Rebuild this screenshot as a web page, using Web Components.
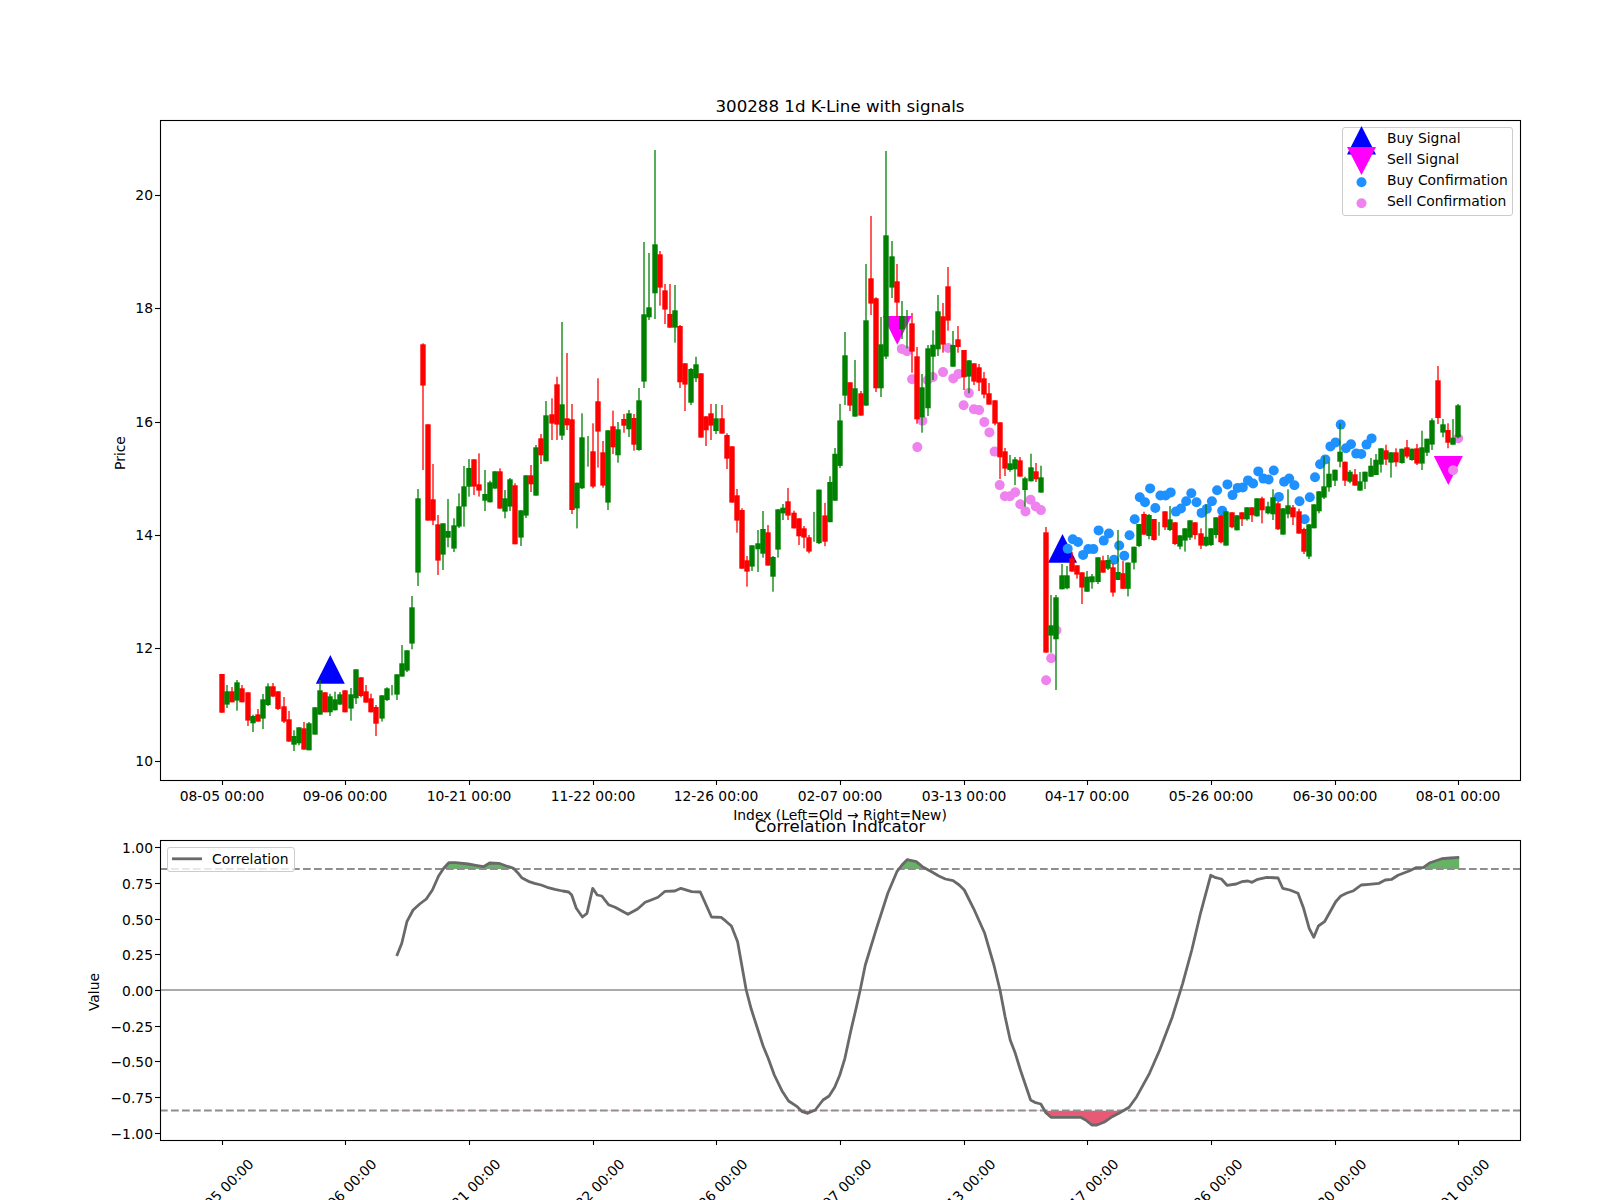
<!DOCTYPE html>
<html>
<head>
<meta charset="utf-8">
<title>300288 1d K-Line with signals</title>
<style>
  html, body { margin: 0; padding: 0; background: #fff; }
</style>
</head>
<body>
<mpl-figure>
  <kline-panel heading="300288 1d K-Line with signals" xlabel="Index (Left=Old → Right=New)">
    <chart-legend style="left:1342px;top:127px;width:171px;height:89px;">
      <legend-row marker="buy">Buy Signal</legend-row>
      <legend-row marker="sell">Sell Signal</legend-row>
      <legend-row marker="buy-dot">Buy Confirmation</legend-row>
      <legend-row marker="sell-dot">Sell Confirmation</legend-row>
    </chart-legend>
  </kline-panel>
  <corr-panel heading="Correlation Indicator">
    <chart-legend style="left:167px;top:23px;width:128px;height:25px;">
      <legend-row marker="line">Correlation</legend-row>
    </chart-legend>
  </corr-panel>
</mpl-figure>

<script>
const SVG_FONT = '"DejaVu Sans", "Liberation Sans", sans-serif';
const TICK_DATES = ['08-05', '09-06', '10-21', '11-22', '12-26', '02-07', '03-13', '04-17', '05-26', '06-30', '08-01'];
const TICK_X = [222.5, 345.5, 469.5, 593.5, 716.5, 840.5, 964.5, 1087.5, 1211.5, 1335.5, 1458.5];

// x position of bar i (241 bars, matplotlib 5% margins)
const barX = i => 221.8 + 5.1517 * i;

// candles: colour, body top, body bottom, wick top, wick bottom, read off crops of the chart
// each block has the crop's top edge and y scale
const CANDLE_BLOCKS = [
  [590, 3, `r252,368,252,368 g304,344,285,354 r304,337,291,337 g277,332,270,362 r295,337,285,337
    r307,392,307,408 g378,400,374,426 r373,395,357,395 g328,386,312,417 g289,345,280,348
    r289,320,279,320 r304,357,304,360 r349,395,321,399 r388,455,363,455 g438,464,421,483
    g412,460,412,466 r415,479,396,479 g400,481,396,481 g352,434,352,434 g301,374,270,374
    r307,367,307,367 g319,367,311,378 g328,361,305,361 g313,344,306,344 r301,367,301,367
    g313,356,294,392 g238,325,238,342 r262,318,262,322 r304,338,285,338 r325,367,311,367
    r351,401,345,438 g316,386,316,395 g295,330,292,333 g300,300,285,316 g253,314,253,330
    g220,260,165,260 g181,242,181,246 g52,161,18,178`],
  [330, 3, `g505,728,477,768 r43,167,40,420 r283,572,283,572 r508,572,402,585 r583,692,555,735
    g580,674,580,720 g603,623,507,652 g586,656,565,666 g529,590,490,594 g469,530,408,590
    g414,470,387,500 r388,470,388,495 r463,482,370,500 g492,512,420,543 g457,517,452,517
    g424,476,424,476 r424,536,415,536 g505,545,480,565 g448,530,444,543 r466,643,460,643
    g541,623,541,648 g436,557,436,564 r436,463,405,486 g352,497,345,497 r325,376,312,402
    g256,394,213,394 r253,281,205,330 r163,284,140,330 g223,317,-24,330 r265,286,69,300
    r268,540,222,552 g458,535,458,595 g322,475,250,477 g360,360,318,410 r364,470,280,475
    r214,305,145,413 r367,467,333,473 g301,518,301,540 r289,352,242,372 g298,376,276,398`],
  [140, 3, `r837,857,822,878 g820,868,810,891 r834,914,822,932 g781,930,744,932 g523,725,306,744
    g502,532,339,540 g313,460,30,537 r343,443,333,497 r451,509,432,552 r522,563,432,563
    g511,563,435,608 r558,727,555,744 r670,734,670,813 g687,788,684,795 g673,715,650,726
    r700,893,700,893 r829,871,829,918 r820,857,792,900 g835,873,792,882 r835,881,795,881
    r885,956,880,987 r919,1088,919,1088 r1066,1142,1047,1178 r1110,1286,1105,1286 r1261,1295,1248,1340
    g1216,1280,1216,1293 g1210,1228,1170,1296 g1167,1241,1113,1253 r1177,1277,1155,1277 g1251,1310,1248,1355
    g1108,1229,1108,1253 g1103,1120,1092,1140 r1084,1127,1044,1140 r1118,1165,1112,1165 r1135,1189,1135,1215
    r1165,1193,1158,1225 r1192,1235,1185,1240`],
  [90, 2.24, `g975,975,945,1012 g895,1015,895,1017 r953,1012,925,1022 g878,968,865,968 g815,920,802,920
    g740,842,703,847`],
  [140, 3, `g646,767,576,795 r727,797,727,813 g745,830,660,830 r760,827,753,827 g541,797,372,797
    r415,491,228,525 r475,745,472,756 g613,745,531,771 g286,650,33,657 g349,443,303,474
    r424,488,372,530 g528,567,483,597 g570,570,510,625 r550,635,519,698 r649,838,621,851
    g742,832,702,878 g625,805,615,828 g614,650,571,720 g514,628,465,648 r529,614,489,638
    r439,542,381,572`],
  [270, 3, `g225,290,183,290 r208,231,168,248 r240,322,240,360 g271,320,271,370 r280,335,280,345
    r292,338,282,363 r325,374,306,385 r370,404,339,404 r391,461,391,466 r457,562,457,627
    r544,596,534,618 g580,600,555,605 g568,598,561,645 r571,620,561,620 g625,660,620,710
    g592,634,551,634 r604,628,579,636 g622,668,587,668 r787,1148,771,1148 g1066,1097,975,1148
    g982,1108,975,1260 g916,958,882,958 g916,955,888,958 r865,905,845,905 r886,914,886,926
    r907,953,907,1002 g920,965,903,965 g919,937,912,956 g862,936,862,942 r871,908,857,908
    g870,896,855,900 r892,968,880,980 g906,930,780,930`],
  [100, 2.24, `r1060,1095,1032,1095 g1036,1095,1036,1112`],
  [450, 3, `g290,338,290,358 g222,288,222,291 r192,254,185,254 g195,258,192,268 r207,270,207,272
    g230,230,216,257 r184,232,184,240 g208,240,168,243 r217,282,217,285 g256,290,256,298
    g235,272,235,305 g211,263,211,270 r217,255,217,268 r250,287,235,297 g260,287,163,290
    g235,285,235,288 g202,255,202,265 r196,277,196,280 g184,287,184,287 r187,232,187,235
    g196,241,196,241 r187,208,187,228 g172,208,172,212 r172,196,172,216 g145,199,145,200
    r145,181,140,220 g169,190,155,193 g142,193,118,210 r160,238,155,240 g175,254,175,254
    g166,193,118,205`],
  [350, 3, `r472,502,465,525 r484,551,476,551 r537,605,533,612 g523,620,523,627 g463,535,463,535
    g424,484,424,490 g409,443,318,447 g371,412,335,425 g359,392,359,408 g305,335,220,352
    r335,392,335,408 g365,395,360,400 r373,407,357,407 g394,422,366,422 g365,395,365,417
    g347,380,324,380 g329,375,312,375 g295,344,295,368 r301,329,284,345 g307,338,307,383
    r307,337,295,350 g296,339,296,341 r292,320,270,325 g296,330,296,332 r295,341,282,345
    g292,341,242,360 g266,308,266,318 g211,284,205,300 r91,204,48,222 g223,248,207,262
    r240,278,220,295 g263,284,207,284 g166,262,162,265`],
];

function readCandles() {
  const out = [];
  CANDLE_BLOCKS.forEach(([y0, k, text]) => {
    text.trim().split(/\s+/).forEach(tok => {
      const [a, b, c, d] = tok.slice(1).split(',').map(v => y0 + Number(v) / k);
      out.push({ color: tok[0] === 'r' ? '#ff0000' : '#008000', top: a, bot: b, wickTop: c, wickBot: d });
    });
  });
  return out;
}

// sell confirmations [bar, y]
const SELL_DOTS = [[132,348.9],[133,351.2],[134,379.3],[135,447.1],[136,420.8],[137,380.2],[138,377.1],[140,372.1],
  [141,348],[142,378.4],[143,373.9],[144,405.2],[145,393.1],[146,409.2],[147,410.1],[148,422.1],[149,432.4],[150,451.6],
  [151,485.1],[152,496.3],[153,496.3],[154,492.2],[155,504.3],[156,511.4],[157,499.8],[158,506.5],[159,510.1],
  [160,680.2],[161,658.3],[162,630.2],[239,470.3],[240,438.3]];

// buy confirmations from bar 164 on, y read at scale 2.24 below y=100
const BUY_DOTS = [1005,984,990,1019,1006,1006,964,987,971,1030,998,1021,975,939,890,901,870,914,886,886,879,922,915,899,881,
  901,925,916,899,874,920,861,885,869,868,852,859,832,848,850,830,889,855,848,863,899,939,890,845,816,805,776,767,727,780,771,
  792,793,772,758].map((z, n) => [164 + n, 100 + z / 2.24]);

const tri = (cx, top, bot, hw, up) => up
  ? `${cx},${top} ${cx - hw},${bot} ${cx + hw},${bot}`
  : `${cx - hw},${top} ${cx + hw},${top} ${cx},${bot}`;

class MplFigure extends HTMLElement {
  constructor() {
    super();
    this.attachShadow({ mode: 'open' });
    this.shadowRoot.innerHTML = `
      <style>
        :host { display: flex; flex-direction: column; width: 1600px; height: 1200px; overflow: hidden; background: #fff; }
      </style>
      <slot></slot>`;
  }
}

class KlinePanel extends HTMLElement {
  constructor() {
    super();
    this.attachShadow({ mode: 'open' });
  }

  connectedCallback() {
    const priceY = p => 761.2 - 56.6 * (p - 10);
    const candles = readCandles();

    const wicksAndBodies = candles.map((c, i) => {
      const x = Math.round(barX(i));
      const body = c.bot > c.top
        ? `<rect x="${x - 2.7}" y="${c.top.toFixed(1)}" width="5.4" height="${(c.bot - c.top).toFixed(1)}" fill="${c.color}"/>`
        : '';
      return `<rect x="${x - 0.65}" y="${c.wickTop.toFixed(1)}" width="1.3" height="${(c.wickBot - c.wickTop).toFixed(1)}" fill="${c.color}"/>${body}`;
    }).join('');

    const dots = (list, fill, dx) => list.map(([i, y]) =>
      `<circle cx="${(barX(i) + dx).toFixed(1)}" cy="${y.toFixed(1)}" r="5" fill="${fill}"/>`).join('');

    const yTicks = [10, 12, 14, 16, 18, 20].map(p => {
      const y = Math.round(priceY(p));
      return `<line x1="155" x2="160" y1="${y + 0.5}" y2="${y + 0.5}" stroke="#000" stroke-width="1.1"/>
        <text x="153" y="${y + 5}" text-anchor="end">${p}</text>`;
    }).join('');

    const xTicks = TICK_X.map((x, n) => `<line x1="${x}" x2="${x}" y1="780" y2="785" stroke="#000" stroke-width="1.1"/>
      <text x="${x - 0.5}" y="801" text-anchor="middle">${TICK_DATES[n]} 00:00</text>`).join('');

    this.shadowRoot.innerHTML = `
      <style>
        :host { display: block; position: relative; flex: 0 0 824px; height: 824px; }
        svg { display: block; overflow: visible; font-family: ${SVG_FONT}; font-size: 13.89px; fill: #000; }
        .title { font-size: 16.67px; }
      </style>
      <svg width="1600" height="824" viewBox="0 0 1600 824">
        <text class="title" x="840" y="111.7" text-anchor="middle">${this.getAttribute('heading')}</text>
        <polygon points="${tri(330.3, 655, 683.7, 14.5, true)}" fill="#0000ff"/>
        <polygon points="${tri(1062.5, 534, 562.7, 14.5, true)}" fill="#0000ff"/>
        <polygon points="${tri(897.3, 316, 344.7, 14.5, false)}" fill="#ff00ff"/>
        <polygon points="${tri(1448.3, 456, 485, 14.5, false)}" fill="#ff00ff"/>
        ${dots(SELL_DOTS, '#ee82ee', 0)}
        ${dots(BUY_DOTS, '#1e90ff', 1)}
        ${wicksAndBodies}
        <rect x="160.5" y="120.5" width="1360" height="660" fill="none" stroke="#000" stroke-width="1.1"/>
        ${yTicks}
        ${xTicks}
        <text x="125" y="453" text-anchor="middle" transform="rotate(-90 125 453)">Price</text>
        <text x="840" y="820" text-anchor="middle">${this.getAttribute('xlabel')}</text>
      </svg>
      <slot></slot>`;
  }
}

// correlation line as read from two crops: x = left + zx / 1.96, y = 800 + zy / 3
const CORR_LEFT = [[660,468],[670,430],[680,365],[692,330],[705,312],[718,297],[730,270],[742,228],[752,205],[762,188],[775,188],
  [800,192],[815,196],[830,200],[842,189],[860,190],[875,198],[888,204],[897,218],[905,233],[918,244],[930,250],[943,255],[955,262],
  [970,268],[985,273],[997,276],[1003,285],[1012,325],[1024,351],[1033,340],[1044,265],[1053,285],[1062,288],[1075,314],[1088,322],
  [1113,343],[1132,327],[1147,307],[1160,299],[1172,292],[1186,274],[1205,273],[1217,265],[1238,275],[1255,276],[1277,351],[1296,352],
  [1304,362],[1316,378],[1328,425],[1345,570],[1355,628],[1378,738],[1388,775],[1400,825],[1415,872],[1428,903],[1445,920],[1455,935]];
const CORR_RIGHT = [[15,940],[30,930],[45,900],[57,888],[68,862],[78,825],[88,775],[100,690],[110,625],[118,570],[128,495],[150,385],
  [172,280],[190,215],[200,195],[210,179],[228,185],[240,200],[258,215],[272,228],[285,237],[300,242],[312,255],[322,270],[340,325],
  [362,400],[380,495],[392,570],[402,650],[412,720],[422,760],[432,810],[452,900],[460,907],[472,912],[482,938],[492,952],[520,952],
  [550,952],[560,960],[572,975],[582,975],[598,965],[612,950],[625,940],[645,922],[660,890],[685,820],[705,750],[730,650],[750,550],
  [768,450],[785,340],[805,226],[815,233],[826,237],[837,256],[855,252],[866,245],[878,243],[886,247],[897,238],[915,232],[937,234],
  [946,265],[960,270],[976,280],[987,325],[998,385],[1007,412],[1016,378],[1028,365],[1050,305],[1060,288],[1072,279],[1085,272],
  [1100,255],[1115,253],[1135,250],[1147,240],[1160,238],[1172,226],[1195,212],[1207,203],[1222,202],[1235,188],[1258,176],[1275,174],[1292,172]];

class CorrPanel extends HTMLElement {
  constructor() {
    super();
    this.attachShadow({ mode: 'open' });
  }

  connectedCallback() {
    const valueY = v => 990 - 142.8 * v;
    const pts = [
      ...CORR_LEFT.map(([a, b]) => [60 + a / 1.96, 800 + b / 3]),
      ...CORR_RIGHT.map(([a, b]) => [800 + a / 1.96, 800 + b / 3]),
    ].map(([x, y]) => `${x.toFixed(1)},${y.toFixed(1)}`);
    const line = pts.join(' ');
    const hi = 869, lo = 1110.5;
    const first = pts[0].split(',')[0], last = pts[pts.length - 1].split(',')[0];

    const labels = [1, 0.75, 0.5, 0.25, 0, -0.25, -0.5, -0.75, -1].map(v => {
      const y = Math.round(valueY(v));
      const text = (v < 0 ? '\u2212' : '') + Math.abs(v).toFixed(2);
      return `<line x1="155" x2="160" y1="${y + 0.5}" y2="${y + 0.5}" stroke="#000" stroke-width="1.1"/>
        <text x="153" y="${y + 5.5}" text-anchor="end">${text}</text>`;
    }).join('');

    // labels run past the bottom of the figure, as in the reference
    const xTicks = TICK_X.map((x, n) => `<line x1="${x}" x2="${x}" y1="1140" y2="1145" stroke="#000" stroke-width="1.1"/>
      <text x="${x - 1.5}" y="1196.5" text-anchor="middle" transform="rotate(-45 ${x - 1.5} 1191.5)">${TICK_DATES[n]} 00:00</text>`).join('');

    this.shadowRoot.innerHTML = `
      <style>
        :host { display: block; position: relative; flex: 0 0 376px; height: 376px; }
        svg { display: block; overflow: visible; font-family: ${SVG_FONT}; font-size: 13.89px; fill: #000; }
        .title { font-size: 16.67px; }
      </style>
      <svg width="1600" height="376" viewBox="0 824 1600 376">
        <defs>
          <clipPath id="above"><rect x="160" y="840" width="1360" height="${hi - 840}"/></clipPath>
          <clipPath id="below"><rect x="160" y="${lo}" width="1360" height="${1140 - lo}"/></clipPath>
        </defs>
        <text class="title" x="840" y="831.7" text-anchor="middle">${this.getAttribute('heading')}</text>
        <polygon clip-path="url(#above)" points="${first},${hi} ${line} ${last},${hi}" fill="#008000" fill-opacity="0.6"/>
        <polygon clip-path="url(#below)" points="${first},${lo} ${line} ${last},${lo}" fill="#dc143c" fill-opacity="0.7"/>
        <line x1="160" x2="1520" y1="${valueY(0)}" y2="${valueY(0)}" stroke="#aaaaaa" stroke-width="2"/>
        <line x1="160" x2="1520" y1="${hi}" y2="${hi}" stroke="#8e8e8e" stroke-width="2" stroke-dasharray="7.7 3.3"/>
        <line x1="160" x2="1520" y1="${lo}" y2="${lo}" stroke="#8e8e8e" stroke-width="2" stroke-dasharray="7.7 3.3"/>
        <polyline points="${line}" fill="none" stroke="#696969" stroke-width="2.8" stroke-linejoin="round"/>
        <rect x="160.5" y="840.5" width="1360" height="300" fill="none" stroke="#000" stroke-width="1.1"/>
        ${labels}
        ${xTicks}
        <text x="98.5" y="992" text-anchor="middle" transform="rotate(-90 98.5 992)">Value</text>
      </svg>
      <slot></slot>`;
  }
}

class ChartLegend extends HTMLElement {
  constructor() {
    super();
    this.attachShadow({ mode: 'open' });
    this.shadowRoot.innerHTML = `
      <style>
        :host {
          display: flex;
          flex-direction: column;
          position: absolute;
          box-sizing: border-box;
          background: rgba(255,255,255,0.8);
          border: 1.1px solid #cccccc;
          border-radius: 3px;
          font-family: ${SVG_FONT};
          font-size: 13.89px;
          color: #000;
        }
      </style>
      <slot></slot>`;
  }
}

class LegendRow extends HTMLElement {
  constructor() {
    super();
    this.attachShadow({ mode: 'open' });
  }

  connectedCallback() {
    const shapes = {
      'buy': `<polygon points="${tri(18.5, -2, 26.5, 14.5, true)}" fill="#0000ff"/>`,
      'sell': `<polygon points="${tri(18.5, -2, 26, 14.5, false)}" fill="#ff00ff"/>`,
      'buy-dot': '<circle cx="18.5" cy="12.3" r="5" fill="#1e90ff"/>',
      'sell-dot': '<circle cx="18.5" cy="12.3" r="5" fill="#ee82ee"/>',
      'line': '<line x1="4" x2="34" y1="10.8" y2="10.8" stroke="#696969" stroke-width="2.8"/>',
    };
    const marker = this.getAttribute('marker');
    this.shadowRoot.innerHTML = `
      <style>
        :host { display: flex; align-items: center; height: ${marker === 'line' ? 21 : 20.9}px; }
        svg { flex: 0 0 ${marker === 'line' ? 43 : 42}px; overflow: visible; }
      </style>
      <svg width="44" height="21">${shapes[marker] || ''}</svg>
      <slot></slot>`;
  }
}

customElements.define('mpl-figure', MplFigure);
customElements.define('kline-panel', KlinePanel);
customElements.define('corr-panel', CorrPanel);
customElements.define('chart-legend', ChartLegend);
customElements.define('legend-row', LegendRow);
</script>
</body>
</html>
